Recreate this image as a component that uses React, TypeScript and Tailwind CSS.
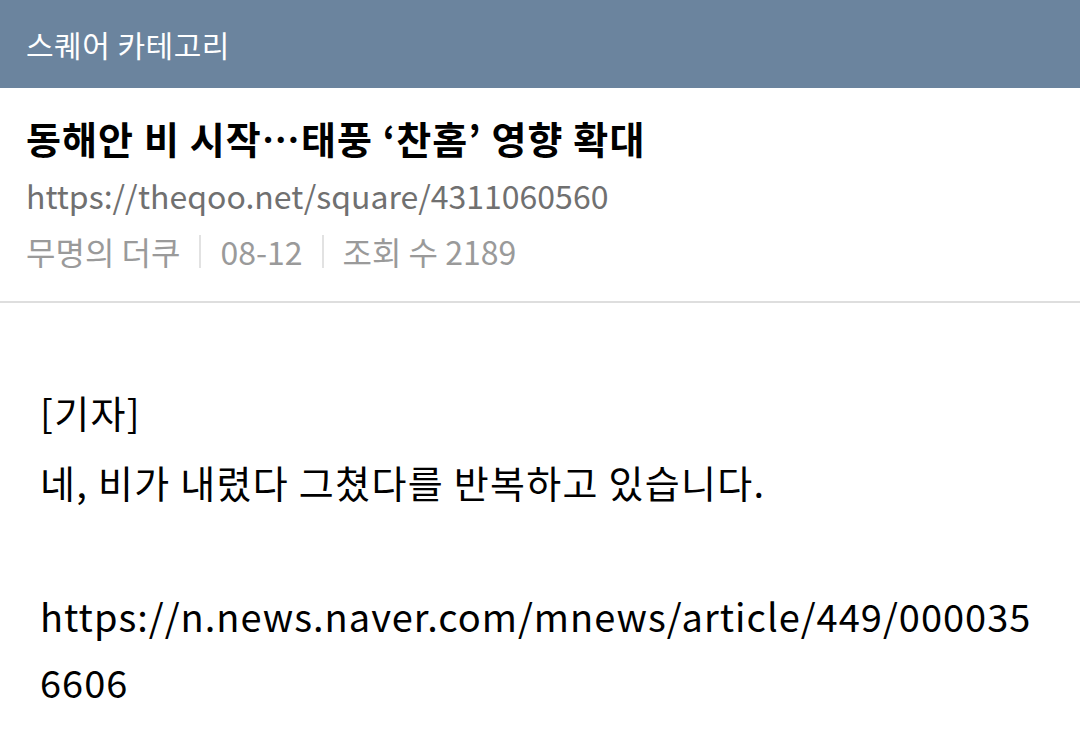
import React from 'react';

const font = { fontFamily: '"Noto Sans CJK KR", "Noto Sans", sans-serif' };

export default function App() {
  const meta = ['무명의 더쿠', '08-12', '조회 수 2189'];

  return (
    <div className="min-h-[747px] w-[1080px] bg-white" style={font}>
      {/* top bar */}
      <div className="flex h-[88px] items-center bg-[#6b849e] pl-[26px]">
        <span className="text-[30px] leading-none tracking-[0.5px] text-white">스퀘어 카테고리</span>
      </div>

      {/* post header */}
      <div className="border-b-2 border-[#dedede] px-[26px] pb-[30px] pt-[28px]">
        <h1 className="text-[38px] font-bold leading-[44px] tracking-[1.1px] text-black">
          동해안 비 시작…태풍 ‘찬홈’ 영향 확대
        </h1>
        <div className="mt-[13px] text-[32px] leading-[44px] text-[#707070]">
          https://theqoo.net/square/4311060560
        </div>
        <div className="mt-[14px] flex items-center text-[32px] leading-[40px] text-[#9a9a9a]">
          {meta.map((m, i) => (
            <React.Fragment key={m}>
              {i > 0 && <span className="mx-[19px] h-[33px] w-[2px] bg-[#e2e2e2]" />}
              <span>{m}</span>
            </React.Fragment>
          ))}
        </div>
      </div>

      {/* body */}
      <div className="px-[40px] pt-[76px] text-[38px] leading-[66px] text-black">
        <p className="mb-[4px] tracking-[1.3px]">[기자]</p>
        <p className="tracking-[1.3px]">네, 비가 내렸다 그쳤다를 반복하고 있습니다.</p>
        <p>&nbsp;</p>
        <p className="mt-[2px] break-all tracking-[1px]">
          https://n.news.naver.com/mnews/article/449/0000356606
        </p>
      </div>
    </div>
  );
}
